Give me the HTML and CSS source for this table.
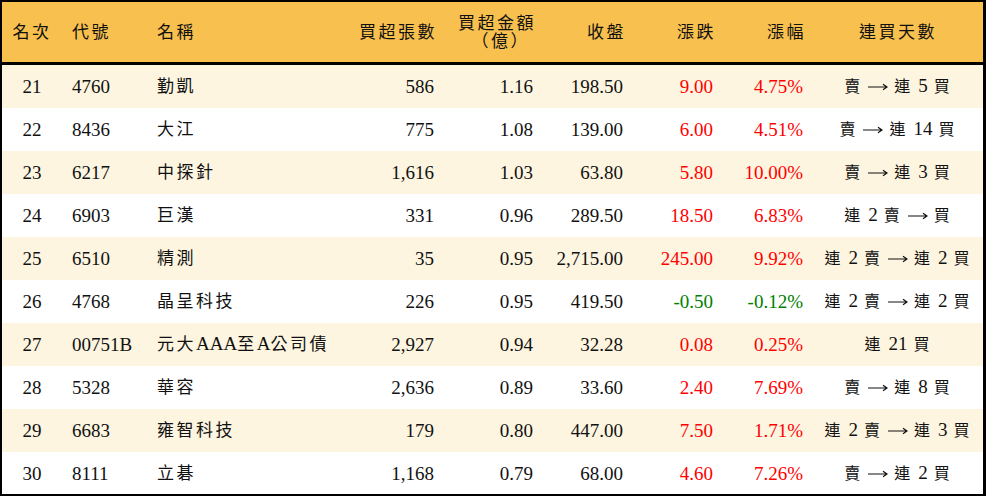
FILE: index.html
```html
<!DOCTYPE html>
<html lang="zh-Hant">
<head>
<meta charset="utf-8">
<title>買超排行</title>
<link rel="stylesheet" href="styles.css">
</head>
<body>
<div class="frame">
<table class="rank">
<colgroup>
<col class="w1"><col class="w2"><col class="w3"><col class="w4"><col class="w5"><col class="w6"><col class="w7"><col class="w8"><col class="w9">
</colgroup>
<thead>
<tr>
<th class="ctr">名次</th>
<th class="lft">代號</th>
<th class="lft">名稱</th>
<th class="rgt">買超張數</th>
<th class="rgt two">買超金額<br><span class="paren">（億）</span></th>
<th class="rgt">收盤</th>
<th class="rgt">漲跌</th>
<th class="rgt">漲幅</th>
<th class="ctr">連買天數</th>
</tr>
</thead>
<tbody>
<tr class="odd"><td class="ctr">21</td><td>4760</td><td class="cj">勤凱</td><td class="rgt">586</td><td class="rgt">1.16</td><td class="rgt">198.50</td><td class="rgt up">9.00</td><td class="rgt up">4.75%</td><td class="ctr days">賣 <svg class="arr" viewBox="0 0 20 10" width="20" height="10"><path d="M0 5H19M15 2.2L19 5L15 7.8"/></svg> 連 <span class="num">5</span> 買</td></tr>
<tr><td class="ctr">22</td><td>8436</td><td class="cj">大江</td><td class="rgt">775</td><td class="rgt">1.08</td><td class="rgt">139.00</td><td class="rgt up">6.00</td><td class="rgt up">4.51%</td><td class="ctr days">賣 <svg class="arr" viewBox="0 0 20 10" width="20" height="10"><path d="M0 5H19M15 2.2L19 5L15 7.8"/></svg> 連 <span class="num">14</span> 買</td></tr>
<tr class="odd"><td class="ctr">23</td><td>6217</td><td class="cj">中探針</td><td class="rgt">1,616</td><td class="rgt">1.03</td><td class="rgt">63.80</td><td class="rgt up">5.80</td><td class="rgt up">10.00%</td><td class="ctr days">賣 <svg class="arr" viewBox="0 0 20 10" width="20" height="10"><path d="M0 5H19M15 2.2L19 5L15 7.8"/></svg> 連 <span class="num">3</span> 買</td></tr>
<tr><td class="ctr">24</td><td>6903</td><td class="cj">巨漢</td><td class="rgt">331</td><td class="rgt">0.96</td><td class="rgt">289.50</td><td class="rgt up">18.50</td><td class="rgt up">6.83%</td><td class="ctr days">連 <span class="num">2</span> 賣 <svg class="arr" viewBox="0 0 20 10" width="20" height="10"><path d="M0 5H19M15 2.2L19 5L15 7.8"/></svg> 買</td></tr>
<tr class="odd"><td class="ctr">25</td><td>6510</td><td class="cj">精測</td><td class="rgt">35</td><td class="rgt">0.95</td><td class="rgt">2,715.00</td><td class="rgt up">245.00</td><td class="rgt up">9.92%</td><td class="ctr days">連 <span class="num">2</span> 賣 <svg class="arr" viewBox="0 0 20 10" width="20" height="10"><path d="M0 5H19M15 2.2L19 5L15 7.8"/></svg> 連 <span class="num">2</span> 買</td></tr>
<tr><td class="ctr">26</td><td>4768</td><td class="cj">晶呈科技</td><td class="rgt">226</td><td class="rgt">0.95</td><td class="rgt">419.50</td><td class="rgt dn">-0.50</td><td class="rgt dn">-0.12%</td><td class="ctr days">連 <span class="num">2</span> 賣 <svg class="arr" viewBox="0 0 20 10" width="20" height="10"><path d="M0 5H19M15 2.2L19 5L15 7.8"/></svg> 連 <span class="num">2</span> 買</td></tr>
<tr class="odd"><td class="ctr">27</td><td>00751B</td><td class="cj">元大<span class="lat">AAA</span>至<span class="lat">A</span>公司債</td><td class="rgt">2,927</td><td class="rgt">0.94</td><td class="rgt">32.28</td><td class="rgt up">0.08</td><td class="rgt up">0.25%</td><td class="ctr days">連 <span class="num">21</span> 買</td></tr>
<tr><td class="ctr">28</td><td>5328</td><td class="cj">華容</td><td class="rgt">2,636</td><td class="rgt">0.89</td><td class="rgt">33.60</td><td class="rgt up">2.40</td><td class="rgt up">7.69%</td><td class="ctr days">賣 <svg class="arr" viewBox="0 0 20 10" width="20" height="10"><path d="M0 5H19M15 2.2L19 5L15 7.8"/></svg> 連 <span class="num">8</span> 買</td></tr>
<tr class="odd"><td class="ctr">29</td><td>6683</td><td class="cj">雍智科技</td><td class="rgt">179</td><td class="rgt">0.80</td><td class="rgt">447.00</td><td class="rgt up">7.50</td><td class="rgt up">1.71%</td><td class="ctr days">連 <span class="num">2</span> 賣 <svg class="arr" viewBox="0 0 20 10" width="20" height="10"><path d="M0 5H19M15 2.2L19 5L15 7.8"/></svg> 連 <span class="num">3</span> 買</td></tr>
<tr><td class="ctr">30</td><td>8111</td><td class="cj">立碁</td><td class="rgt">1,168</td><td class="rgt">0.79</td><td class="rgt">68.00</td><td class="rgt up">4.60</td><td class="rgt up">7.26%</td><td class="ctr days">賣 <svg class="arr" viewBox="0 0 20 10" width="20" height="10"><path d="M0 5H19M15 2.2L19 5L15 7.8"/></svg> 連 <span class="num">2</span> 買</td></tr>
</tbody>
</table>
</div>
</body>
</html>
```

FILE: styles.css
```css
html, body {
  margin: 0;
  padding: 0;
  background: #ffffff;
}

.frame {
  box-sizing: border-box;
  width: 986px;
  height: 496px;
  border-top: 2px solid #000;
  border-left: 2px solid #000;
  border-bottom: 2px solid #000;
  border-right: 3px solid #000;
  overflow: hidden;
}

.rank {
  width: 981px;
  border-collapse: collapse;
  table-layout: fixed;
  font-family: "Liberation Serif", "Noto Sans CJK TC", serif;
  font-size: 19px;
  color: #111;
}

.w1 { width: 60px; }
.w2 { width: 85px; }
.w3 { width: 193px; }
.w4 { width: 104px; }
.w5 { width: 99px; }
.w6 { width: 90px; }
.w7 { width: 90px; }
.w8 { width: 90px; }
.w9 { width: 170px; }

.rank thead tr {
  background: #f8c04e;
  border-bottom: 3px solid #000;
}

.rank th {
  height: 59px;
  padding: 0 10px;
  font-weight: 400;
  font-size: 17px;
  letter-spacing: 2.5px;
  line-height: 19px;
  vertical-align: middle;
  white-space: nowrap;
}

.rank th.rgt { padding-right: 7px; }
.rank th.two { line-height: 18px; padding-top: 1px; }
.paren { display: inline-block; padding-right: 6px; }

.rank td {
  height: 43px;
  padding: 0 10px;
  vertical-align: middle;
  white-space: nowrap;
  line-height: 22px;
}

.rank tr.odd { background: #fdf5e0; }

.ctr { text-align: center; }
.lft { text-align: left; }
.rgt { text-align: right; }

.cj {
  font-size: 17px;
  letter-spacing: 2.5px;
}

.lat {
  font-size: 19px;
  letter-spacing: 0;
}

.rank td.days {
  font-size: 16px;
  letter-spacing: 2px;
  padding: 0 6px;
}

.days .num {
  font-size: 19px;
  letter-spacing: 0;
}

.arr {
  vertical-align: middle;
  margin-top: -2px;
  fill: none;
  stroke: #111;
  stroke-width: 1.2;
}

.up { color: #ff0000; }
.dn { color: #008000; }
```
